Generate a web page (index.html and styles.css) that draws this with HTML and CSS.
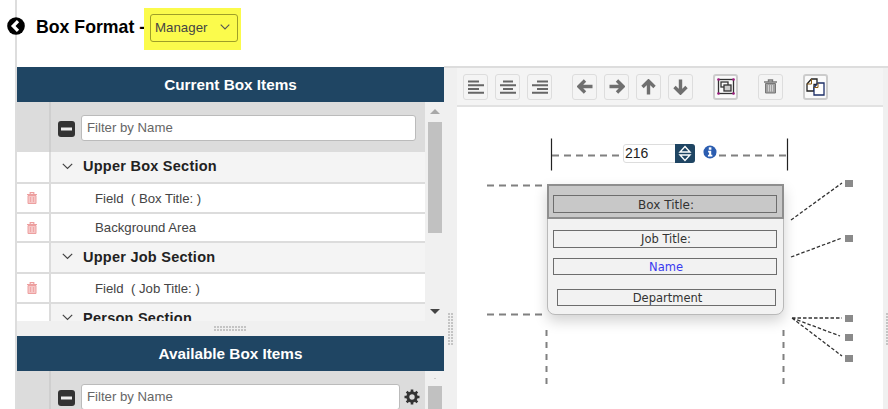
FILE: index.html
```html
<!DOCTYPE html>
<html>
<head>
<meta charset="utf-8">
<title>Box Format</title>
<link rel="stylesheet" href="styles.css">
</head>
<body>
<div class="gutter">
  <svg class="back" width="18" height="18" viewBox="0 0 18 18"><circle cx="9" cy="9" r="8.8" fill="#000"/><path d="M11 4.200 6.200 9l4.800 4.800" fill="none" stroke="#fff" stroke-width="3.200"/></svg>
</div>
<div class="page">
  <header class="head">
    <h1 class="title">Box Format -</h1>
    <div class="hilite">
      <div class="select"><span>Manager</span>
        <svg width="10" height="6" viewBox="0 0 10 6"><path d="M.7.7 5 5l4.300-4.300" fill="none" stroke="#555" stroke-width="1.100"/></svg>
      </div>
    </div>
  </header>
  <main class="work">
    <section class="left">
      <div class="panel current">
        <div class="phead">Current Box Items</div>
        <div class="pbody">
          <div class="list">
            <div class="row filter">
              <div class="c1"></div>
              <div class="c2">
                <svg class="minus" width="17" height="16" viewBox="0 0 17 16"><rect width="17" height="16" rx="3" fill="#333"/><rect x="3" y="6.500" width="11" height="3" fill="#eee"/></svg>
                <div class="input">Filter by Name</div>
              </div>
            </div>
            <div class="row sec"><div class="c1"></div><div class="c2"><svg class="chev" width="11" height="7" viewBox="0 0 11 7"><path d="M.8.8 5.500 5.500 10.200.8" fill="none" stroke="#444" stroke-width="1.200"/></svg><b>Upper Box Section</b></div></div>
            <div class="row item"><div class="c1"><svg class="trash" width="10" height="12" viewBox="0 0 10 12"><use href="#t"/></svg></div><div class="c2">Field &nbsp;( Box Title: )</div></div>
            <div class="row item"><div class="c1"><svg class="trash" width="10" height="12" viewBox="0 0 10 12"><use href="#t"/></svg></div><div class="c2">Background Area</div></div>
            <div class="row sec"><div class="c1"></div><div class="c2"><svg class="chev" width="11" height="7" viewBox="0 0 11 7"><path d="M.8.8 5.500 5.500 10.200.8" fill="none" stroke="#444" stroke-width="1.200"/></svg><b>Upper Job Section</b></div></div>
            <div class="row item"><div class="c1"><svg class="trash" width="10" height="12" viewBox="0 0 10 12"><use href="#t"/></svg></div><div class="c2">Field &nbsp;( Job Title: )</div></div>
            <div class="row sec"><div class="c1"></div><div class="c2"><svg class="chev" width="11" height="7" viewBox="0 0 11 7"><path d="M.8.8 5.500 5.500 10.200.8" fill="none" stroke="#444" stroke-width="1.200"/></svg><b>Person Section</b></div></div>
          </div>
          <div class="sbar">
            <svg width="12" height="6" viewBox="0 0 12 6"><path d="M6 0l5 5H1z" fill="#a8a8a8"/></svg>
            <div class="thumb"></div>
            <svg class="down" width="12" height="6" viewBox="0 0 12 6"><path d="M1 0h10L6 5z" fill="#444"/></svg>
          </div>
        </div>
      </div>
      <div class="hsplit"><span class="dots-h"></span></div>
      <div class="panel avail">
        <div class="phead">Available Box Items</div>
        <div class="pbody">
          <div class="list">
            <div class="row filter">
              <div class="c1"></div>
              <div class="c2">
                <svg class="minus" width="17" height="16" viewBox="0 0 17 16"><rect width="17" height="16" rx="3" fill="#333"/><rect x="3" y="6.500" width="11" height="3" fill="#eee"/></svg>
                <div class="input short">Filter by Name</div>
                <svg class="gear" width="16" height="16" viewBox="0 0 16 16"><circle cx="8" cy="8" r="4.200" fill="none" stroke="#333" stroke-width="3"/><path d="M8 0.500v3M8 12.500v3M.5 8h3M12.500 8h3M2.700 2.700l2.100 2.100M11.200 11.200l2.100 2.100M13.300 2.700l-2.100 2.100M4.800 11.200l-2.100 2.100" stroke="#333" stroke-width="2.600"/></svg>
              </div>
            </div>
          </div>
          <div class="sbar">
            <svg width="12" height="6" viewBox="0 0 12 6"><path d="M6 0l5 5H1z" fill="#a8a8a8"/></svg>
            <div class="thumb"></div>
          </div>
        </div>
      </div>
    </section>
    <div class="vsplit"><span class="dots-v"></span></div>
    <section class="right">
      <div class="toolbar">
        <div class="group">
          <button class="tb"><svg width="18" height="14" viewBox="0 0 18 14"><path d="M1 1.500h11M1 5.300h16M1 9h11M1 12.700h16" stroke="#666" stroke-width="2"/></svg></button>
          <button class="tb"><svg width="18" height="14" viewBox="0 0 18 14"><path d="M4 1.500h10M1 5.300h16M4 9h10M1 12.700h16" stroke="#666" stroke-width="2"/></svg></button>
          <button class="tb"><svg width="18" height="14" viewBox="0 0 18 14"><path d="M6 1.500h11M1 5.300h16M6 9h11M1 12.700h16" stroke="#666" stroke-width="2"/></svg></button>
        </div>
        <div class="group g2">
          <button class="tb"><svg width="16" height="15" viewBox="0 0 16 15"><path d="M8 1.500 2 7.500l6 6M2.500 7.500H15.500" fill="none" stroke="#6f6f6f" stroke-width="3.400"/></svg></button>
          <button class="tb"><svg width="16" height="15" viewBox="0 0 16 15"><path d="M8 1.500l6 6-6 6M13.500 7.500H.5" fill="none" stroke="#6f6f6f" stroke-width="3.400"/></svg></button>
          <button class="tb"><svg width="15" height="16" viewBox="0 0 15 16"><path d="M1.500 8l6-6 6 6M7.500 2.500V15.500" fill="none" stroke="#6f6f6f" stroke-width="3.400"/></svg></button>
          <button class="tb"><svg width="15" height="16" viewBox="0 0 15 16"><path d="M1.500 8l6 6 6-6M7.500 13.500V.5" fill="none" stroke="#6f6f6f" stroke-width="3.400"/></svg></button>
        </div>
        <button class="tb dark g3"><svg width="18" height="17" viewBox="0 0 18 17"><rect x="1.500" y="1.500" width="15" height="14" fill="none" stroke="#333" stroke-width="1.300"/><rect x="4" y="4" width="7" height="5" fill="none" stroke="#333" stroke-width="1.300"/><rect x="7" y="7" width="7" height="6" fill="#ccc" stroke="#333" stroke-width="1.300"/><g fill="#a01a80"><circle cx="1.500" cy="1.500" r="1.300"/><circle cx="16.500" cy="1.500" r="1.300"/><circle cx="1.500" cy="15.500" r="1.300"/><circle cx="16.500" cy="15.500" r="1.300"/></g></svg></button>
        <button class="tb g4"><svg width="13" height="15" viewBox="0 0 13 15"><path d="M0 3h13M4.500 3V1h4v2" fill="none" stroke="#777" stroke-width="1.400"/><path d="M1.500 4.500h10V14h-10z" fill="#a0a0a0" stroke="#777"/><path d="M4.500 6v6.500M6.500 6v6.500M8.500 6v6.500" stroke="#ddd" stroke-width=".8"/></svg></button>
        <button class="tb dark g5"><svg width="19" height="18" viewBox="0 0 19 18"><path d="M1 6 5.500 1H11v5.500H8V13H1z" fill="#fff" stroke="#222" stroke-width="1.300"/><path d="M1 6h4.500V1" fill="none" stroke="#8a5a10"/><path d="M8 9.500 12 5h6v12H8z" fill="#fff" stroke="#1d2f68" stroke-width="1.300"/><path d="M8 9.500h4V5" fill="none" stroke="#8a5a10"/></svg></button>
      </div>
      <div class="canvas">
        <svg class="lines" width="426" height="302" viewBox="0 0 426 302">
          <g stroke="#222" stroke-width="1.200">
            <path d="M94.500 31.500V63.500M330.500 31.500V63.500"/>
          </g>
          <g stroke="#808080" stroke-width="2" stroke-dasharray="7 5" fill="none">
            <path d="M95 48.500h72M250 48.500h80"/>
            <path d="M30 78.500h60M30 207.500h58"/>
            <path d="M89.500 223v55M326.500 223v55" stroke-dasharray="6 6"/>
          </g>
          <g stroke="#333" stroke-width="1.300" stroke-dasharray="3.500 2" fill="none">
            <path d="M334 113l51-37M334 150l51-19"/>
            <path d="M335 211h50M335 211l48 18M335 211l50 38"/>
          </g>
        </svg>
        <div class="num"><span class="numv">216</span><span class="spin"><svg width="14" height="19" viewBox="0 0 14 19"><path d="M7 2.500 12 8H2zM2 11h10l-5 5.500z" fill="none" stroke="#fff" stroke-width="1.400"/></svg></span></div>
        <svg class="info" width="14" height="14" viewBox="0 0 15 15"><circle cx="7.500" cy="7.500" r="7" fill="#2b5db0"/><rect x="6.200" y="2.500" width="2.800" height="2.600" fill="#fff"/><path d="M5.500 6.200h3.300v4.300H10v1.800H5.300v-1.800h1.200V8H5.500z" fill="#fff"/></svg>
        <div class="box">
          <div class="boxhead"><div class="fld dk">Box Title:</div></div>
          <div class="fld f1">Job Title:</div>
          <div class="fld f2 blue">Name</div>
          <div class="fld f3">Department</div>
        </div>
        <i class="pin p1"></i><i class="pin p2"></i><i class="pin p3"></i><i class="pin p4"></i><i class="pin p5"></i>
      </div>
    </section>
    <div class="rgut"><span class="dots-v"></span></div>
  </main>
</div>
<svg class="defs" width="0" height="0"><defs><g id="t"><path d="M0 2.500h10M3.200 2.500V.7h3.600v1.800" fill="none" stroke="#eda0a0" stroke-width="1.200"/><path d="M1 3.500h8V11.500H1z" fill="#f6c6c6" stroke="#eda0a0"/><path d="M3.500 5v5M6.500 5v5" stroke="#eda0a0" stroke-width=".8"/></g></defs></svg>
</body>
</html>
```
FILE: styles.css
```css
* { box-sizing: border-box; }
html, body { margin: 0; height: 100%; overflow: hidden; background: #fff; }
body { display: flex; width: 888px; height: 409px; font-family: "Liberation Sans", Arial, sans-serif; color: #333; }
.gutter { width: 17px; flex: none; border-right: 2px solid #ddd; position: relative; }
.back { position: absolute; left: 7px; top: 17px; }
.page { flex: 1; min-width: 0; display: flex; flex-direction: column; }
.head { height: 67px; flex: none; display: flex; align-items: flex-start; }
.title { margin: 17px 0 0 19px; width: 108px; font-size: 17.700px; line-height: 21px; font-weight: 700; color: #000; white-space: nowrap; }
.hilite { margin: 8px 0 0 0; width: 97px; height: 42px; background: #fbfb4c; padding: 6px 3px 0 6px; }
.select { width: 88px; height: 28px; border: 1px solid #9f9f28; border-radius: 3px; display: flex; align-items: center; justify-content: space-between; padding: 0 7px 2px 4px; font-size: 13.300px; color: #444; }
.work { flex: 1; display: flex; min-height: 0; }
.left { width: 427px; flex: none; display: flex; flex-direction: column; }
.panel { display: flex; flex-direction: column; overflow: hidden; }
.current { height: 254px; }
.avail { flex: 1; min-height: 0; }
.phead { height: 35px; flex: none; background: #1f4563; color: #fff; font-size: 15.300px; font-weight: 700; text-align: center; line-height: 35px; }
.pbody { flex: 1; display: flex; min-height: 0; }
.list { flex: 1; min-width: 0; overflow: hidden; background: #f4f4f4; }
.row { display: flex; border-bottom: 2px solid #dcdcdc; }
.c1 { width: 34px; flex: none; border-right: 2px solid #dcdcdc; display: flex; align-items: center; justify-content: center; background: #fff; padding-right: 3px; }
.c2 { flex: 1; display: flex; align-items: center; min-width: 0; }
.filter { height: 50px; background: #dcdcdc; border-bottom: 0; }
.filter .c1 { background: #dcdcdc; border-right-color: #cfcfcf; }
.filter .c2 { padding-left: 7px; align-items: flex-start; padding-top: 13px; position: relative; }
.minus { margin: 6px 6px 0 0; flex: none; }
.input { width: 335px; height: 26px; background: #fff; border: 1px solid #bbb; border-radius: 3px; font-size: 13.200px; line-height: 24px; padding-left: 5px; color: #666; }
.input.short { width: 319px; }
.gear { flex: none; margin: 5px 0 0 4px; }
.sec { height: 32px; background: #f4f4f4; }
.item + .sec { height: 31px; }
.sec .c2 { padding: 0 0 2px 11px; font-size: 14.500px; color: #222; letter-spacing: .25px; }
.chev { margin-right: 10px; flex: none; }
.item { height: 30px; background: #fff; }
.item .c2 { background: #fff; padding-left: 44px; font-size: 13.200px; color: #444; }
.item + .item { height: 29px; }
.sbar { width: 19px; flex: none; background: #f0f0f0; display: flex; flex-direction: column; align-items: center; padding: 7px 0 0 1px; position: relative; }
.thumb { width: 14px; height: 111px; margin-top: 7px; background: #c1c1c1; }
.down { position: absolute; bottom: 6px; left: 4px; }
.hsplit { height: 15px; flex: none; background: #f0f0f0; display: flex; align-items: center; justify-content: center; }
.dots-h { width: 33px; height: 6px; background-image: linear-gradient(90deg, #c4c4c4 2px, transparent 2px); background-size: 3px 3px; -webkit-mask: linear-gradient(#000 2px, transparent 2px) 0 0 / 3px 3px; mask: linear-gradient(#000 2px, transparent 2px) 0 0 / 3px 3px; }
.dots-v { width: 6px; height: 33px; flex: none; background-image: linear-gradient(90deg, #c4c4c4 2px, transparent 2px); background-size: 3px 3px; -webkit-mask: linear-gradient(#000 2px, transparent 2px) 0 0 / 3px 3px; mask: linear-gradient(#000 2px, transparent 2px) 0 0 / 3px 3px; }
.vsplit { width: 13px; flex: none; background: #f0f0f0; border-top: 2px solid #ddd; margin-top: -1px; display: flex; align-items: center; justify-content: center; padding-top: 182px; }
.rgut { width: 5px; flex: none; background: #f0f0f0; border-top: 2px solid #ddd; margin-top: -1px; display: flex; align-items: center; padding: 182px 0 0 3px; overflow: hidden; }
.right { flex: 1; min-width: 0; display: flex; flex-direction: column; }
.toolbar { height: 41px; flex: none; background: #f4f4f4; border-top: 2px solid #ddd; border-bottom: 2px solid #e2e2e2; display: flex; align-items: center; padding-left: 6px; margin-top: -1px; }
.group { display: flex; gap: 7px; }
.tb { width: 25px; height: 26px; padding: 0; background: #f4f4f4; border: 1px solid #ddd; border-radius: 3px; display: flex; align-items: center; justify-content: center; }
.dark { border: 2px solid #ccc; background: #fafafa; }
.g2, .g3, .g4, .g5 { margin-left: 20px; }
.canvas { flex: 1; position: relative; background: #fff; min-height: 0; overflow: hidden; }
.lines { position: absolute; left: 0; top: 0; }
.num { position: absolute; left: 166px; top: 37px; width: 72px; height: 19px; background: #fff; border: 1px solid #ddd; border-radius: 3px; display: flex; justify-content: space-between; font-size: 14px; line-height: 17px; color: #222; }
.numv { padding-left: 1px; }
.spin { width: 20px; height: 19px; margin: -1px -1px 0 0; background: #1f4563; border-radius: 0 3px 3px 0; display: flex; align-items: center; justify-content: center; }
.info { position: absolute; left: 246px; top: 38px; }
.box { position: absolute; left: 90px; top: 77px; width: 237px; height: 131px; background: #f2f2f2; border: 1px solid #b9b9b9; border-radius: 0 0 8px 8px; box-shadow: 0 6px 14px rgba(0,0,0,.18); }
.boxhead { margin: -1px -1px 0; height: 35px; background: #c8c8c8; border: 2px solid #8e8e8e; padding: 9px 5px 0 4px; }
.fld { border: 1px solid #6d6d6d; height: 17px; background: #f2f2f2; text-align: center; font-size: 11.500px; line-height: 16px; padding-left: 2px; color: #333; font-family: "DejaVu Sans", sans-serif; position: absolute; }
.boxhead .fld { position: static; background: #c8c8c8; height: 18px; font-size: 12px; line-height: 18px; }
.f1 { left: 5px; width: 224px; top: 45px; height: 18px; }
.f2 { left: 5px; width: 224px; top: 73px; }
.f3 { left: 9px; width: 219px; top: 104px; }
.blue { color: #3a3af0; }
.pin { position: absolute; width: 8px; height: 7px; background: #8a8a8a; }
.p1 { left: 388px; top: 73px; }
.p2 { left: 388px; top: 128px; }
.p3 { left: 388px; top: 208px; }
.p4 { left: 388px; top: 227px; }
.p5 { left: 388px; top: 248px; }
.defs { position: absolute; }
```
